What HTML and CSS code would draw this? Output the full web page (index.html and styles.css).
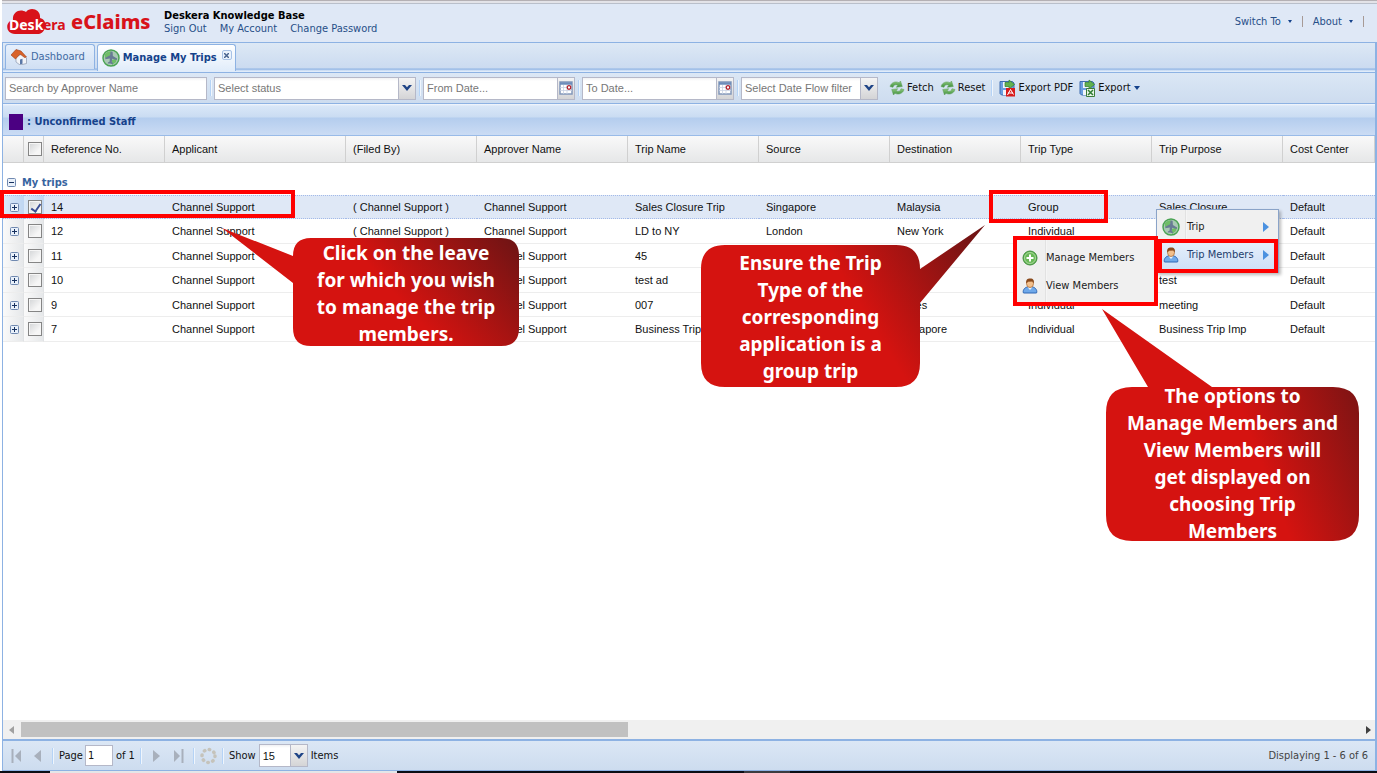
FILE: index.html
```html
<!DOCTYPE html>
<html lang="en">
<head>
<meta charset="utf-8">
<title>Deskera eClaims - Manage My Trips</title>
<link rel="stylesheet" href="styles.css">
</head>
<body>
<svg class="defs" aria-hidden="true">
  <defs>
    <linearGradient id="gGreen" x1="0" y1="0" x2="0" y2="1"><stop offset="0" stop-color="#8fc97f"/><stop offset="1" stop-color="#3e8f3c"/></linearGradient>
    <linearGradient id="gRed" x1="0" y1="0.5" x2="1" y2="0.15"><stop offset="0" stop-color="#d51310"/><stop offset=".5" stop-color="#d51310"/><stop offset="1" stop-color="#701414"/></linearGradient>
    <symbol id="plane" viewBox="0 0 18 18">
      <circle cx="9" cy="9" r="8" fill="#a9c9b4" stroke="#4aa352" stroke-width="1.500"/>
      <path d="M3 5q4-4 7-2l-3 5-4 1zM10 11l5-2-1 4-4 3z" fill="#6fbd66"/>
      <path d="M8.600 2.500l2 .2.300 4.300 4.100 2.500-.2 1.500-4.500-1.200-.5 3 1.200 1.500-.3.900-2.700-.7-2.300 0 .3-1 1.600-1 .2-3-4.500.7v-1.500l4.800-2.500z" fill="#687b94"/>
    </symbol>
    <symbol id="refresh" viewBox="0 0 16 16">
      <path d="M1 6.500C2 2.500 6.500.8 10 2.700L11.500 1l1.800 5.500-6 .8 1.500-2C6.500 4 4.500 5 4 7.300z" fill="url(#gGreen)" stroke="#5c9d56" stroke-width=".5"/>
      <path d="M15 9.500c-1 4-5.500 5.700-9 3.800L4.500 15 2.700 9.500l6-.8-1.500 2c2.300 1.300 4.300.3 4.800-2z" fill="url(#gGreen)" stroke="#5c9d56" stroke-width=".5"/>
    </symbol>
    <symbol id="person" viewBox="0 0 16 16">
      <path d="M1.500 15c-1-2 .5-5.500 4-6h5c3.500.5 5 4 4 6z" fill="#6fa9ea" stroke="#2e67b5"/>
      <path d="M5.500 9.300L8 12l2.500-2.700z" fill="#e9f2fc"/>
      <ellipse cx="8" cy="5.500" rx="3.500" ry="4" fill="#f3c08c" stroke="#a8652c" stroke-width=".7"/>
      <path d="M4.300 5.500C3.500 1.500 6 .3 8.300.5c3 0 4.200 2 3.400 5L10.500 3.500 6 3.800z" fill="#8a4a1c"/>
    </symbol>
    <symbol id="cal" viewBox="0 0 14 14">
      <rect x="1" y="1" width="12" height="12" fill="#fff" stroke="#8398ba" stroke-width="1.500"/>
      <path d="M1 2.500h12" stroke="#6d8cba" stroke-width="2.500"/>
      <path d="M1 6.500h12M1 9.500h12M4.500 4v9M8 4v9" stroke="#c9d2e3" stroke-width=".8"/>
      <circle cx="10" cy="6.500" r="1.800" fill="#fff" stroke="#b3202c" stroke-width="1.300"/>
    </symbol>
    <symbol id="chev" viewBox="0 0 10 8"><path d="M0 1h3l2 2.300L7 1h3L5 7z" fill="#1f4486"/></symbol>
    <symbol id="disk" viewBox="0 0 17 18">
      <path d="M1 2.500h12.500L15 4v12H2.500L1 14.500z" fill="#6c9fe0" stroke="#3f6cae"/>
      <path d="M4 3h8v6H4zM4 11h7v5H4z" fill="#f1f5fb"/>
      <path d="M6 3.500h4V1l5.500 4.500L10 10V7.500H6z" fill="#62b14f" stroke="#2f7d2b" stroke-width=".7"/>
    </symbol>
    <symbol id="plus" viewBox="0 0 9 9">
      <rect x=".5" y=".5" width="8" height="8" rx="1" fill="#e8f0fa" stroke="#7089b0"/>
      <path d="M2 4.500h5M4.500 2v5" stroke="#16305f"/>
    </symbol>
    <symbol id="minus" viewBox="0 0 9 9">
      <rect x=".5" y=".5" width="8" height="8" rx="1" fill="#e8f0fa" stroke="#7089b0"/>
      <path d="M2 4.500h5" stroke="#16305f"/>
    </symbol>
  </defs>
</svg>
<div class="app">
  <header class="header">
    <svg class="logo" width="62" height="30" viewBox="0 0 62 30" role="img" aria-label="Deskera">
      <path d="M8 27C-2 27-2 14 6 13 5 5 13 1 19 5 24-1 34 3 33 11c8 2 7 14-1 16z" fill="#d8121a"/>
      <text x="2" y="23" class="logo-a">Desk</text>
      <text x="36" y="23" class="logo-b">era</text>
    </svg>
    <span class="product">eClaims</span>
    <div class="account">
      <strong>Deskera Knowledge Base</strong>
      <nav class="links"><a href="#">Sign Out</a><a href="#">My Account</a><a href="#">Change Password</a></nav>
    </div>
    <nav class="top-menu">
      <button>Switch To<i class="caret"></i></button><i class="bar"></i><button>About<i class="caret"></i></button><i class="bar"></i>
    </nav>
  </header>
  <main class="panel">
    <nav class="tabs">
      <button class="tab"><svg width="16" height="16" viewBox="0 0 16 16"><path d="M5 8l6-3 4.500 4v5.500L9 16l-4-3z" fill="#f2f4f8" stroke="#8b97ad" stroke-width=".7"/><path d="M0 6l5-5.500L10 2l5.500 6-2 .5L9 5 4.500 10z" fill="#d9632a" stroke="#9c3d16" stroke-width=".6"/><path d="M9 10.500l2.500-.8v5L9 15.500z" fill="#5a78a8"/></svg>Dashboard</button>
      <button class="tab active"><svg width="18" height="18"><use href="#plane"/></svg>Manage My Trips<span class="close"><svg width="5" height="5" viewBox="0 0 5 5"><path d="M0 0l5 5M5 0L0 5" stroke="#49648f" stroke-width="1.500"/></svg></span></button>
    </nav>
    <div class="toolbar">
      <input class="field search" type="text" placeholder="Search by Approver Name" aria-label="Search by Approver Name">
      <i class="sep"></i>
      <span class="combo status"><select aria-label="Status"><option>Select status</option></select><span class="trigger"><svg width="10" height="8"><use href="#chev"/></svg></span></span>
      <i class="sep"></i>
      <span class="combo date"><input type="text" placeholder="From Date..." aria-label="From date"><button class="trigger" aria-label="Pick from date"><svg width="14" height="14"><use href="#cal"/></svg></button></span>
      <i class="sep"></i>
      <span class="combo date"><input type="text" placeholder="To Date..." aria-label="To date"><button class="trigger" aria-label="Pick to date"><svg width="14" height="14"><use href="#cal"/></svg></button></span>
      <i class="sep"></i>
      <span class="combo flow"><select aria-label="Date flow filter"><option>Select Date Flow filter</option></select><span class="trigger"><svg width="10" height="8"><use href="#chev"/></svg></span></span>
      <div class="actions">
        <button><svg width="16" height="16"><use href="#refresh"/></svg>Fetch</button>
        <button><svg width="16" height="16"><use href="#refresh"/></svg>Reset</button>
        <i class="sep"></i>
        <button><svg width="17" height="18" viewBox="0 0 17 18"><use href="#disk"/><path d="M7 9h9v8.500H7z" fill="#d81b1b"/><path d="M8.500 16l3-5.500 3 5M9 14h5" stroke="#fff" fill="none"/></svg>Export PDF</button>
        <button><svg width="17" height="18" viewBox="0 0 17 18"><use href="#disk"/><path d="M7.500 9.500h8v8h-8z" fill="#e9f3e6" stroke="#3b7d3a"/><path d="M9 11l5 5M14 11l-5 5" stroke="#2f7d34" stroke-width="1.500"/></svg>Export<i class="caret big"></i></button>
      </div>
    </div>
    <div class="legend"><i class="swatch"></i>: Unconfirmed Staff</div>
    <section class="grid">
      <table>
        <colgroup><col class="c-exp"><col class="c-chk"><col class="c-ref"><col class="c-app"><col class="c-std"><col class="c-apr"><col class="c-std"><col class="c-std"><col class="c-std"><col class="c-std"><col class="c-std"><col></colgroup>
        <thead>
          <tr><th></th><th class="mid"><input type="checkbox" aria-label="Select all"></th><th>Reference No.</th><th>Applicant</th><th>(Filed By)</th><th>Approver Name</th><th>Trip Name</th><th>Source</th><th>Destination</th><th>Trip Type</th><th>Trip Purpose</th><th>Cost Center</th></tr>
        </thead>
        <tbody>
          <tr class="group"><td colspan="12"><svg width="9" height="9"><use href="#minus"/></svg>My trips</td></tr>
          <tr class="selected"><td class="tool"><svg width="9" height="9"><use href="#plus"/></svg></td><td class="tool"><input type="checkbox" checked aria-label="Select 14"></td><td>14</td><td>Channel Support</td><td>( Channel Support )</td><td>Channel Support</td><td>Sales Closure Trip</td><td>Singapore</td><td>Malaysia</td><td>Group</td><td>Sales Closure</td><td>Default</td></tr>
          <tr><td class="tool"><svg width="9" height="9"><use href="#plus"/></svg></td><td class="tool"><input type="checkbox" aria-label="Select 12"></td><td>12</td><td>Channel Support</td><td>( Channel Support )</td><td>Channel Support</td><td>LD to NY</td><td>London</td><td>New York</td><td>Individual</td><td></td><td>Default</td></tr>
          <tr><td class="tool"><svg width="9" height="9"><use href="#plus"/></svg></td><td class="tool"><input type="checkbox" aria-label="Select 11"></td><td>11</td><td>Channel Support</td><td></td><td>Channel Support</td><td>45</td><td></td><td></td><td></td><td></td><td>Default</td></tr>
          <tr><td class="tool"><svg width="9" height="9"><use href="#plus"/></svg></td><td class="tool"><input type="checkbox" aria-label="Select 10"></td><td>10</td><td>Channel Support</td><td></td><td>Channel Support</td><td>test ad</td><td></td><td></td><td></td><td>test</td><td>Default</td></tr>
          <tr><td class="tool"><svg width="9" height="9"><use href="#plus"/></svg></td><td class="tool"><input type="checkbox" aria-label="Select 9"></td><td>9</td><td>Channel Support</td><td></td><td>Channel Support</td><td>007</td><td></td><td>Wales</td><td>Individual</td><td>meeting</td><td>Default</td></tr>
          <tr><td class="tool"><svg width="9" height="9"><use href="#plus"/></svg></td><td class="tool"><input type="checkbox" aria-label="Select 7"></td><td>7</td><td>Channel Support</td><td></td><td>Channel Support</td><td>Business Trip</td><td></td><td>Singapore</td><td>Individual</td><td>Business Trip Imp</td><td>Default</td></tr>
        </tbody>
      </table>
      <div class="scrollbar"><svg width="5" height="8" viewBox="0 0 5 8"><path d="M5 0v8L0 4z" fill="#a0a0a0"/></svg><div class="track"><div class="thumb"></div></div><svg width="5" height="8" viewBox="0 0 5 8"><path d="M0 0v8l5-4z" fill="#404040"/></svg></div>
    </section>
    <footer class="pager">
      <button aria-label="First page"><svg width="10" height="14" viewBox="0 0 10 14"><path d="M1.500 0v14" stroke="#a8b0bc" stroke-width="2"/><path d="M10 1v12L4 7z" fill="#a8b0bc"/></svg></button>
      <button class="prev" aria-label="Previous page"><svg width="7" height="12" viewBox="0 0 7 12"><path d="M7 0v12L0 6z" fill="#a8b0bc"/></svg></button>
      <i class="sep"></i>
      <label class="page">Page<input type="text" value="1"></label><span>of 1</span>
      <i class="sep"></i>
      <button class="next" aria-label="Next page"><svg width="7" height="12" viewBox="0 0 7 12"><path d="M0 0v12l7-6z" fill="#a8b0bc"/></svg></button>
      <button class="last" aria-label="Last page"><svg width="10" height="14" viewBox="0 0 10 14"><path d="M8.500 0v14" stroke="#a8b0bc" stroke-width="2"/><path d="M0 1v12l6-6z" fill="#a8b0bc"/></svg></button>
      <i class="sep"></i>
      <button class="reload" aria-label="Refresh"><svg width="17" height="18" viewBox="0 0 17 18"><circle cx="8.500" cy="9" r="6.500" fill="none" stroke="#c5c3bb" stroke-width="3.500" stroke-linecap="round" stroke-dasharray="0.500 4.600"/></svg></button>
      <i class="sep"></i>
      <label class="show" for="size">Show</label>
      <span class="combo size"><select id="size"><option>15</option></select><span class="trigger"><svg width="10" height="8"><use href="#chev"/></svg></span></span><span class="items">Items</span>
      <span class="count">Displaying 1 - 6 of 6</span>
    </footer>
  </main>
  <div class="taskbar"><i class="task light"></i><i class="task dim"></i></div>

  <div class="menu context">
    <button><svg width="18" height="18"><use href="#plane"/></svg><span>Trip</span><i class="arrow"></i></button>
    <button class="hover"><svg width="16" height="16"><use href="#person"/></svg><span>Trip Members</span><i class="arrow"></i></button>
  </div>
  <div class="menu submenu">
    <button><svg width="16" height="16" viewBox="0 0 16 16"><circle cx="8" cy="8" r="7" fill="#68b857" stroke="#3f8d3c"/><circle cx="8" cy="8" r="5.500" fill="none" stroke="#b9e0ae" stroke-width=".8"/><path d="M8 4.500v7M4.500 8h7" stroke="#fff" stroke-width="2"/></svg><span>Manage Members</span></button>
    <button><svg width="16" height="16"><use href="#person"/></svg><span>View Members</span></button>
  </div>
  <div class="mark mark-row"></div>
  <div class="mark mark-type"></div>
  <div class="mark mark-item"></div>

  <div class="callout one">
    <svg width="297" height="118" viewBox="0 0 297 118"><path d="M0 0L71 28Q71 10 89 10H279Q297 10 297 28V100Q297 118 279 118H89Q71 118 71 100V55z" fill="url(#gRed)"/></svg>
    <p>Click on the leave<br>for which you wish<br>to manage the trip<br>members.</p>
  </div>
  <div class="callout two">
    <svg width="284" height="162" viewBox="0 0 284 162"><path d="M24 20H195Q219 20 219 44L284 0L219 78V138Q219 162 195 162H24Q0 162 0 138V44Q0 20 24 20z" fill="url(#gRed)"/></svg>
    <p>Ensure the Trip<br>Type of the<br>corresponding<br>application is a<br>group trip</p>
  </div>
  <div class="callout three">
    <svg width="257" height="232" viewBox="0 0 257 232"><path d="M0 0L110 78H231Q257 78 257 104V206Q257 232 231 232H30Q4 232 4 206V104Q4 78 30 78H46z" fill="url(#gRed)"/></svg>
    <p>The options to<br>Manage Members and<br>View Members will<br>get displayed on<br>choosing Trip<br>Members</p>
  </div>
</div>
</body>
</html>
```
FILE: styles.css
```css
* { box-sizing: border-box; }
body { margin: 0; background: #fff; }
.defs { position: absolute; width: 0; height: 0; }
svg { display: block; flex: none; }
button, input, select { font: inherit; color: inherit; margin: 0; }
button { display: flex; align-items: center; padding: 0; border: 0; background: none; white-space: nowrap; }
a { color: inherit; text-decoration: none; }

.app {
  position: relative;
  display: flex;
  flex-direction: column;
  height: 100vh;
  overflow: hidden;
  padding-left: 2px;
  font: 11px/14px "DejaVu Sans Condensed", "Noto Sans", sans-serif;
  color: #111;
}

/* Header */
.header {
  display: flex;
  align-items: center;
  height: 42px;
  padding: 0 12px 0 5px;
  border-top: 1px solid #b4b0b4;
  box-shadow: inset 0 2px #e3e3e8, inset 0 3px #b9bfca;
  background: #dfe8f6;
}
.logo-a, .logo-b { font: bold 14px "Noto Sans", sans-serif; }
.logo-a { fill: #fff; }
.logo-b { fill: #d8121a; }
.product { margin-left: 2px; width: 91px; font: 800 20px/24px "Noto Sans", sans-serif; color: #d8121a; }
.account { margin-left: 2px; line-height: 13px; }
.account strong { color: #000; }
.links { display: flex; gap: 13px; color: #274f88; }
.top-menu { display: flex; align-items: center; gap: 10px; margin-left: auto; padding-right: 1px; color: #274f88; }
.caret { border: 2px solid transparent; border-top: 3px solid #15428b; border-bottom: 0; margin-left: 7px; }
.caret.big { border-width: 4px 3px 0; margin-left: 1px; }
.bar { width: 1px; height: 11px; background: #a79a96; }

/* Panel */
.panel { flex: 1; display: flex; flex-direction: column; min-height: 0; border: solid #8db2e3; border-width: 1px 2px 0 1px; }
.tabs {
  display: flex;
  align-items: flex-end;
  gap: 2px;
  height: 30px;
  padding: 0 2px 3px;
  border-bottom: 1px solid #8db2e3;
  background: linear-gradient(#dde8f5, #cbdbf0 25px, #8db2e3 26px, #e0ecfa 28px);
}
.tab {
  height: 25px;
  gap: 4px;
  padding: 0 9px 0 5px;
  border: 1px solid #8db2e3;
  border-bottom: 0;
  border-radius: 3px 3px 0 0;
  background: linear-gradient(#e6f0fc, #d0dff3);
  color: #416aa3;
}
.tab.active { height: 27px; gap: 3px; margin-bottom: -2px; padding: 0 3px 0 4px; font-weight: bold; background: linear-gradient(#fff, #e0ecfa); color: #15428b; }
.close { display: grid; place-items: center; align-self: flex-start; width: 10px; height: 10px; margin: 5px 0 0 2px; border: 1px solid #a8c2e6; border-radius: 2px; background: #eaf2fc; }

.toolbar, .pager { display: flex; align-items: center; background: linear-gradient(#dbe7f5, #cddcef); }
.toolbar { height: 31px; padding-left: 2px; border-bottom: 1px solid #8db2e3; }
.field, .combo { height: 23px; border: 1px solid #b5b8c8; background: linear-gradient(#f0f1f3, #fff 3px); font-family: "Liberation Sans", Arial, sans-serif; }
.field { padding: 0 3px; }
.search { width: 202px; }
.combo { display: flex; }
.combo input, .combo select { flex: 1; min-width: 0; padding: 0 3px; border: 0; border-radius: 0; background: none; appearance: none; outline: 0; color: #777; }
.trigger { flex: none; display: grid; place-items: center; width: 17px; border-left: 1px solid #b5b8c8; background: linear-gradient(#f4f4f4, #d4d4d6); pointer-events: none; }
::placeholder { color: #777; opacity: 1; }
.sep { flex: none; width: 2px; height: 16px; margin: 0 2px 0 3px; background: #b5d3f6; border-right: 1px solid #eff5fc; }
.status { width: 202px; }
.date { width: 152px; }
.flow { width: 137px; }
.actions { display: flex; align-items: center; gap: 6px; margin-left: 11px; }
.actions button { gap: 2px; }
.actions .sep { margin: 0; }

.legend {
  display: flex;
  align-items: center;
  gap: 4px;
  height: 32px;
  padding: 5px 6px 0;
  font-weight: bold;
  color: #15428b;
  border-bottom: 1px solid #99bbe8;
  background: linear-gradient(#f4f8fd, #d9e7f8 2px, #cadcf2 13px, #b4cdee 14px, #cbdcf4);
}
.swatch { width: 14px; height: 16px; background: #4b0082; }

/* Grid */
.grid { flex: 1; display: flex; flex-direction: column; min-height: 0; font-family: "Liberation Sans", Arial, sans-serif; background: #fff; }
table { width: 100%; table-layout: fixed; border-collapse: separate; border-spacing: 0; }
.c-exp { width: 21px; }
.c-chk { width: 20px; }
.c-ref { width: 121px; }
.c-app { width: 181px; }
.c-apr { width: 151px; }
.c-std { width: 131px; }
th { height: 27px; padding: 0 0 0 7px; font-weight: normal; text-align: left; border-right: 1px solid #d0d0d0; border-bottom: 1px solid #d0d0d0; background: linear-gradient(#f9f9f9, #e6e7e8); }
th.mid { padding: 0 0 0 4px; }
td { height: 24px; padding: 0 0 0 7px; white-space: nowrap; border-bottom: 1px solid #ededed; }
tr:nth-child(odd) td { height: 25px; }
tr.group td { height: 32px; padding: 8px 3px 0 4px; font: bold 11px/14px "DejaVu Sans Condensed", "Noto Sans", sans-serif; color: #3764a0; border: 0; }
tr.group svg { display: inline-block; margin-right: 6px; vertical-align: -1px; }
td.tool { padding: 0 0 0 4px; border-right: 1px solid #e0e2e4; background: linear-gradient(90deg, #fafafa, #e6e8ea); }
.tool svg { margin: 1px auto 0 3px; }
.selected td { background: #dfe8f6; border: 1px dotted #a3bae9; border-width: 1px 0; }
.selected td.tool { background: linear-gradient(90deg, #dbe8f8, #bfd6f2); }
input[type="checkbox"] { display: block; position: relative; width: 14px; height: 14px; appearance: none; border: 1px solid #858585; background: linear-gradient(135deg, #d2d4d6, #f6f6f6 70%); box-shadow: inset 0 0 0 1px #f6f6f6; }
input[type="checkbox"]:checked::after { content: ""; position: absolute; left: 4px; top: 1px; width: 4px; height: 8px; border: solid #3a4f95; border-width: 0 2px 2px 0; transform: rotate(35deg); }

.scrollbar { display: flex; align-items: center; gap: 7px; height: 19px; margin-top: auto; padding: 0 4px 0 6px; background: #f0f0f0; }
.track { flex: 1; }
.thumb { width: 45.4%; height: 15px; background: #c1c1c1; }

/* Pager */
.pager { height: 32px; padding: 0 7px 0 8px; border-top: 2px solid #8db2e3; border-bottom: 1px solid #8db2e3; }
.pager .sep { margin: 0 5px; }
.prev { margin: 0 6px 0 13px; }
.page { display: flex; align-items: center; gap: 2px; margin-right: 3px; }
.page input { width: 28px; height: 21px; padding: 0 2px; border: 1px solid #b5b8c8; background: #fff; }
.next { margin: 0 14px 0 6px; }
.last { margin-right: 4px; }
.show { margin-right: 3px; }
.combo.size { width: 49px; }
.combo.size select { color: #111; }
.items { margin-left: 3px; }
.count { margin-left: auto; color: #444; }
.taskbar { display: flex; flex: none; height: 2px; margin-left: -2px; padding-left: 50px; background: #0b0d14; }
.light { width: 347px; background: #e4e6e8; }
.dim { width: 46px; margin-left: 347px; background: #3c3c40; }

/* Menus and highlight frames float over the grid */
.menu { position: absolute; background: linear-gradient(90deg, #f0f0f0 28px, #d8d8d8 28px, #fff 30px, #f0f0f0 30px); color: #222; }
.menu button { width: 100%; height: 28px; padding-left: 5px; }
.menu span { margin-left: 7px; }
.menu svg { width: 18px; }
.context { left: 1156px; top: 209px; width: 123px; padding: 3px 0; border: 1px solid #8aa3c8; box-shadow: 2px 2px 3px #0004; }
.menu .hover { background: linear-gradient(#e6f0fc, #cfe0f7); color: #233d6d; }
.arrow { margin-left: auto; margin-right: 9px; border: 5px solid transparent; border-left: 6px solid #4b91e0; border-right: 0; }
.submenu { left: 1013px; top: 236px; width: 145px; padding: 4px 0 2px; border: 4px solid #f00; }
.submenu button { padding-left: 4px; }
.mark { position: absolute; border: 4px solid #f00; }
.mark-row { left: 0; top: 190px; width: 295px; height: 28px; }
.mark-type { left: 989px; top: 190px; width: 119px; height: 33px; }
.mark-item { left: 1158px; top: 239px; width: 120px; height: 34px; }

/* Callouts */
.callout { position: absolute; display: grid; }
.callout svg, .callout p { grid-area: 1 / 1; }
.callout p { align-self: center; margin: 0; text-align: center; white-space: nowrap; font: bold 19px/27px "Noto Sans", sans-serif; color: #fff; }
.one { left: 222px; top: 228px; }
.one p { padding: 12px 0 0 71px; }
.two { left: 701px; top: 225px; }
.two p { padding: 22px 65px 0 0; }
.three { left: 1102px; top: 309px; }
.three p { padding: 74px 0 0 4px; }
```
